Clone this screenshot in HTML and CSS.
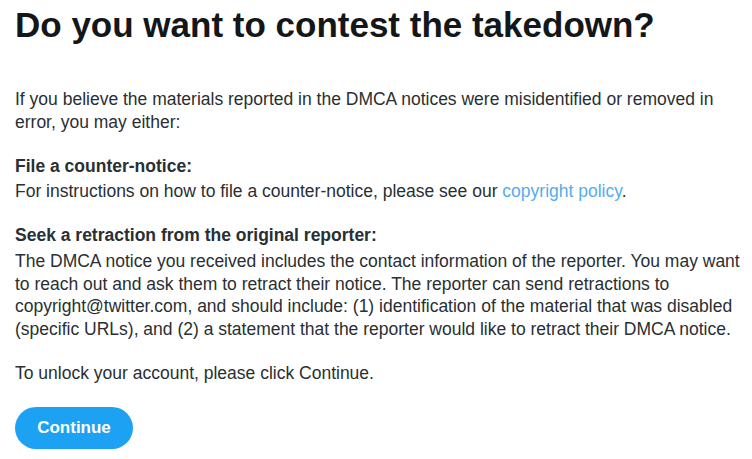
FILE: index.html
```html
<!DOCTYPE html>
<html>
<head>
<meta charset="utf-8">
<link rel="stylesheet" href="styles.css">
</head>
<body>
<main class="page">
  <h1 class="title">Do you want to contest the takedown?</h1>
  <p class="para intro">If you believe the materials reported in the DMCA notices were misidentified or removed in error, you may either:</p>
  <div class="section">
    <div class="section-title">File a counter-notice:</div>
    <p class="section-text">For instructions on how to file a counter-notice, please see our <a class="link" href="#">copyright policy</a>.</p>
  </div>
  <div class="section">
    <div class="section-title">Seek a retraction from the original reporter:</div>
    <p class="section-text">The DMCA notice you received includes the contact information of the reporter. You may want to reach out and ask them to retract their notice. The reporter can send retractions to copyright@twitter.com, and should include: (1) identification of the material that was disabled (specific URLs), and (2) a statement that the reporter would like to retract their DMCA notice.</p>
  </div>
  <p class="para">To unlock your account, please click Continue.</p>
  <button class="btn" type="button">Continue</button>
</main>
</body>
</html>
```

FILE: styles.css
```css
html, body {
  margin: 0;
  padding: 0;
  background: #ffffff;
}
.page {
  padding: 0 6px 0 15px;
  font-family: "Liberation Sans", Arial, sans-serif;
  color: #292f33;
  font-size: 17.5px;
  line-height: 22.75px;
}
.title {
  margin: 0;
  padding-top: 4px;
  font-size: 35px;
  line-height: 42px;
  font-weight: bold;
  color: #14171a;
}
.para {
  margin: 21px 0 0 0;
}
.intro {
  margin-top: 42px;
}
.section {
  margin-top: 21px;
}
.section-title {
  font-weight: bold;
}
.section-text {
  margin: 3px 0 0 0;
}
.link {
  color: #55acee;
  text-decoration: none;
}
.btn {
  margin-top: 22px;
  display: block;
  width: 118px;
  height: 42px;
  border: none;
  border-radius: 21px;
  background: #1da1f2;
  color: #ffffff;
  font-family: "Liberation Sans", Arial, sans-serif;
  font-size: 17px;
  font-weight: bold;
  padding: 0;
}
```
